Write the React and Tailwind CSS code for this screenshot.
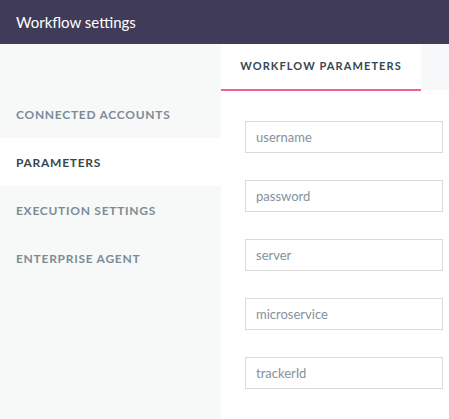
export default function App() {
  const items = [
    { label: "Connected Accounts", active: false },
    { label: "Parameters", active: true },
    { label: "Execution Settings", active: false },
    { label: "Enterprise Agent", active: false },
  ];
  const fields = ["username", "password", "server", "microservice", "trackerId"];
  const font = { fontFamily: "Lato, 'Open Sans', sans-serif" };
  return (
    <div className="w-[449px] h-[419px] flex flex-col overflow-hidden bg-white" style={font}>
      <div className="h-[44px] shrink-0 bg-[#403b58] flex items-center px-4 text-white text-[15px]">
        Workflow settings
      </div>
      <div className="flex flex-1 min-h-0">
        <div className="w-[221px] shrink-0 bg-[#f7f9f9] pt-[46px] flex flex-col">
          {items.map((it) => (
            <div
              key={it.label}
              className={
                it.active
                  ? "h-[48px] flex items-center px-4 pt-[2px] bg-white text-[#37474f] text-[12px] font-bold tracking-[0.06em] uppercase"
                  : "h-[48px] flex items-center px-4 pt-[2px] text-[#7d8b95] text-[12px] font-bold tracking-[0.06em] uppercase"
              }
            >
              {it.label}
            </div>
          ))}
        </div>
        <div className="flex-1 flex flex-col bg-white">
          <div className="h-[47px] flex shrink-0">
            <div className="w-[200px] h-[47px] flex items-center justify-center border-b-2 border-[#f06292] text-[#37474f] text-[11px] font-bold tracking-[0.1em] uppercase">
              Workflow Parameters
            </div>
            <div className="flex-1 h-[46px] bg-[#f7f8fa]"></div>
          </div>
          <div className="pl-6 pr-[6px] pt-[30px] flex flex-col gap-[27px]">
            {fields.map((f) => (
              <input
                key={f}
                placeholder={f}
                className="h-8 w-full border border-[#dadada] px-[10px] text-[13px] text-[#37474f] placeholder:text-[#86919a] outline-none"
                style={font}
              />
            ))}
          </div>
        </div>
      </div>
    </div>
  );
}
